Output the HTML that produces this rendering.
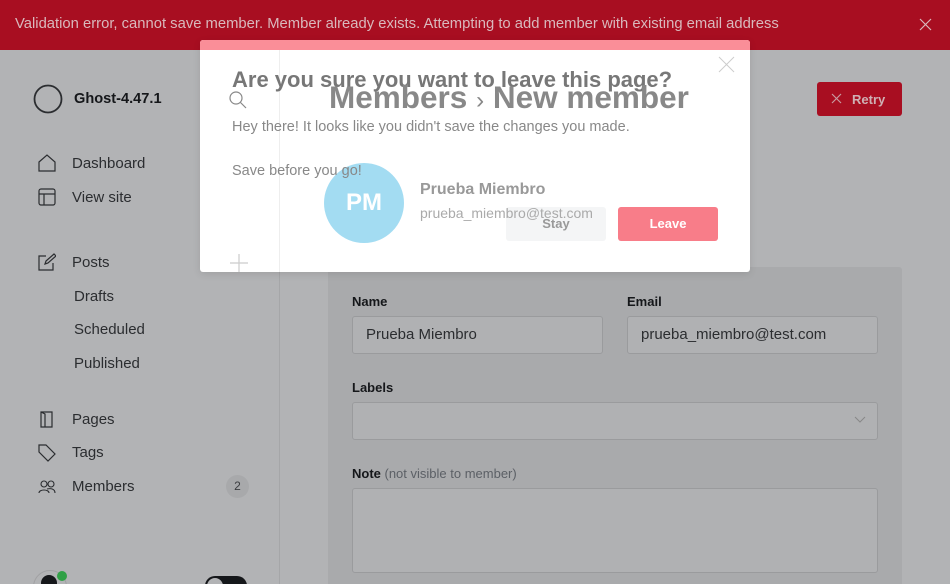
<!DOCTYPE html>
<html style="overflow:hidden;width:950px;height:584px"><head><meta charset="utf-8"><style>
*{margin:0;padding:0;box-sizing:border-box}
body{width:950px;height:584px;overflow:hidden;background:#b2b3b5;font-family:"Liberation Sans","DejaVu Sans",sans-serif;position:relative}
.a{position:absolute;white-space:nowrap}
.nav{position:absolute;left:72px;font-size:15px;color:#2b2d30}
.ic{position:absolute;left:38px}
.lbl{position:absolute;font-size:13px;font-weight:bold;color:#15171a}
.inp{position:absolute;border:1px solid #9a9b9d;border-radius:3px;background:#b0b1b3;font-size:15px;color:#2b2d30;padding-left:13px}
</style></head><body>
<div class="a" style="left:0;top:0;width:950px;height:50px;background:#a80e21"></div>
<div class="a" style="left:15px;top:16px;font-size:14.8px;color:#d9b9bd">Validation error, cannot save member. Member already exists. Attempting to add member with existing email address</div>
<svg class="a" style="left:919px;top:18px" width="13" height="13"><path d="M1 1L12 12M12 1L1 12" stroke="#d9b9bd" stroke-width="1.2"/></svg>

<div class="a" style="left:279px;top:50px;width:1px;height:534px;background:#a5a6a8"></div>
<svg class="a" style="left:32px;top:84px" width="32" height="32"><circle cx="16" cy="15" r="13.5" fill="none" stroke="#2b2d30" stroke-width="1.8"/></svg>
<div class="a" style="left:74px;top:91px;font-size:14.6px;font-weight:bold;color:#15171a">Ghost-4.47.1</div>

<svg class="ic" style="top:154px" width="18" height="18"><path d="M1 8L9 1L17 8V17H1Z" fill="none" stroke="#2b2d30" stroke-width="1.2"/></svg>
<div class="nav" style="top:155px">Dashboard</div>
<svg class="ic" style="top:188px" width="18" height="18"><rect x="1" y="1" width="16" height="16" rx="2" fill="none" stroke="#2b2d30" stroke-width="1.2"/><path d="M1 6H17M6 6V17" stroke="#2b2d30" stroke-width="1.2"/></svg>
<div class="nav" style="top:189px">View site</div>
<svg class="ic" style="top:253px" width="18" height="18"><path d="M8 3H1V17H15V10M7 11L8 8L16 1L18 3L10 10Z" fill="none" stroke="#2b2d30" stroke-width="1.2"/></svg>
<div class="nav" style="top:254px">Posts</div>
<div class="nav" style="left:74px;top:288px">Drafts</div>
<div class="nav" style="left:74px;top:321px">Scheduled</div>
<div class="nav" style="left:74px;top:355px">Published</div>
<svg class="ic" style="top:410px" width="18" height="18"><path d="M3 2H14V17H3ZM3 2L7 4V17" fill="none" stroke="#2b2d30" stroke-width="1.2"/></svg>
<div class="nav" style="top:411px">Pages</div>
<svg class="ic" style="top:444px" width="18" height="18"><path d="M1 1H8L17 10L10 17L1 8Z" fill="none" stroke="#2b2d30" stroke-width="1.2"/></svg>
<div class="nav" style="top:444px">Tags</div>
<svg class="ic" style="top:478px" width="18" height="18"><circle cx="6" cy="6" r="3" fill="none" stroke="#2b2d30" stroke-width="1.1"/><circle cx="13" cy="6" r="3" fill="none" stroke="#2b2d30" stroke-width="1.1"/><path d="M1 15C1 11 11 11 11 15M9 11C13 10 17 11 17 15" fill="none" stroke="#2b2d30" stroke-width="1.1"/></svg>
<div class="nav" style="top:478px">Members</div>
<div class="a" style="left:226px;top:475px;width:23px;height:23px;border-radius:50%;background:#a8a9ab;font-size:12px;color:#3b3d40;text-align:center;line-height:23px">2</div>
<div class="a" style="left:33px;top:570px;width:34px;height:14px;overflow:hidden">
  <div class="a" style="left:0;top:0;width:34px;height:34px;border-radius:50%;border:1px solid #a0a1a3"></div>
  <div class="a" style="left:8px;top:5px;width:16px;height:16px;border-radius:50%;background:#15171a"></div>
</div>
<div class="a" style="left:57px;top:571px;width:10px;height:10px;border-radius:50%;background:#30a046"></div>
<div class="a" style="left:205px;top:576px;width:42px;height:8px;overflow:hidden">
  <div class="a" style="left:0;top:0;width:42px;height:20px;border-radius:10px;background:#15171a"></div>
  <div class="a" style="left:2px;top:2px;width:16px;height:16px;border-radius:50%;background:#b2b3b5"></div>
</div>

<div class="a" style="left:817px;top:82px;width:85px;height:34px;background:#a80e21;border-radius:3px"></div>
<svg class="a" style="left:831px;top:93px" width="11" height="11"><path d="M1 1L10 10M10 1L1 10" stroke="#c79aa0" stroke-width="1.2"/></svg>
<div class="a" style="left:852px;top:92px;font-size:13px;font-weight:bold;color:#cfb0b4">Retry</div>

<div class="a" style="left:328px;top:267px;width:574px;height:317px;background:#a9aaac;border-radius:3px 3px 0 0"></div>
<div class="lbl" style="left:352px;top:294px">Name</div>
<div class="lbl" style="left:627px;top:294px">Email</div>
<div class="inp" style="left:352px;top:316px;width:251px;height:38px;line-height:36px">Prueba Miembro</div>
<div class="inp" style="left:627px;top:316px;width:251px;height:38px;line-height:36px">prueba_miembro@test.com</div>
<div class="lbl" style="left:352px;top:380px">Labels</div>
<div class="inp" style="left:352px;top:402px;width:526px;height:38px"></div>
<svg class="a" style="left:854px;top:416px" width="12" height="8"><path d="M1 1L6 6L11 1" fill="none" stroke="#888" stroke-width="1"/></svg>
<div class="lbl" style="left:352px;top:466px">Note <span style="font-weight:normal;color:#5c6066">(not visible to member)</span></div>
<div class="inp" style="left:352px;top:488px;width:526px;height:85px"></div>

<div class="a" style="left:200px;top:40px;width:550px;height:232px;background:#fff;border-radius:3px;box-shadow:0 2px 8px rgba(0,0,0,.1)"></div>
<div class="a" style="left:200px;top:40px;width:550px;height:10px;background:#fa8e98;border-radius:3px 3px 0 0"></div>
<div class="a" style="left:279px;top:50px;width:1px;height:222px;background:#eee"></div>
<svg class="a" style="left:718px;top:56px" width="17" height="17"><path d="M1 1L16 16M16 1L1 16" stroke="#ccc" stroke-width="1"/></svg>
<div class="a" style="left:232px;top:67px;font-size:22px;font-weight:bold;color:#777">Are you sure you want to leave this page?</div>
<div class="a" style="left:329px;top:79px;font-size:31.5px;font-weight:bold;color:#888">Members <span style="font-weight:normal;font-size:24px">›</span> New member</div>
<svg class="a" style="left:228px;top:90px" width="20" height="20"><circle cx="8" cy="8" r="6" fill="none" stroke="#888" stroke-width="1.2"/><path d="M12.5 12.5L18 18" stroke="#888" stroke-width="1.2"/></svg>
<div class="a" style="left:232px;top:119px;font-size:14.5px;color:#888">Hey there! It looks like you didn't save the changes you made.</div>
<div class="a" style="left:506px;top:207px;width:100px;height:34px;background:#f4f5f6;border-radius:3px;font-size:13px;font-weight:bold;color:#999;text-align:center;line-height:34px">Stay</div>
<div class="a" style="left:618px;top:207px;width:100px;height:34px;background:#f87d89;border-radius:3px;font-size:13px;font-weight:bold;color:#fff;text-align:center;line-height:34px">Leave</div>
<div class="a" style="left:324px;top:163px;width:80px;height:80px;border-radius:50%;background:#a3dcf2;color:#fff;font-size:24px;font-weight:bold;text-align:center;line-height:80px">PM</div>
<div class="a" style="left:232px;top:163px;font-size:14.5px;color:#888">Save before you go!</div>
<div class="a" style="left:420px;top:181px;font-size:16px;font-weight:bold;color:#999">Prueba Miembro</div>
<div class="a" style="left:420px;top:205px;font-size:14px;color:#aaa">prueba_miembro@test.com</div>
<svg class="a" style="left:230px;top:254px" width="18" height="18"><path d="M9 0V18M0 9H18" stroke="#ccc" stroke-width="1.2"/></svg>
</body></html>
